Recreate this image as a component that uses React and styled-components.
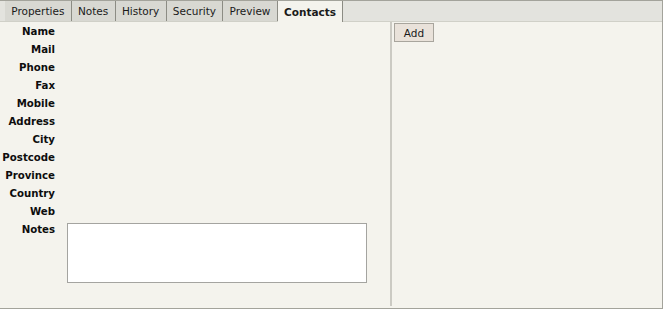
import styled, { createGlobalStyle } from "styled-components";

const GlobalStyle = createGlobalStyle`
  body {
    margin: 0;
    background: #f4f3ed;
    font-family: "DejaVu Sans", Verdana, sans-serif;
  }
`;

const tabs = ["Properties", "Notes", "History", "Security", "Preview", "Contacts"];
const fields = [
  "Name",
  "Mail",
  "Phone",
  "Fax",
  "Mobile",
  "Address",
  "City",
  "Postcode",
  "Province",
  "Country",
  "Web",
];

const App = () => {
  return (
    <>
      <GlobalStyle />
      <Frame>
        <TabBar>
          {tabs.map((t) => (
            <Tab key={t} $active={t === "Contacts"}>
              {t}
            </Tab>
          ))}
        </TabBar>
        <Body>
          <FormPanel>
            <Form>
              {fields.map((f) => (
                <Row key={f}>
                  <Label>{f}</Label>
                  <span />
                </Row>
              ))}
              <Row $tall>
                <Label>Notes</Label>
                <NotesArea />
              </Row>
            </Form>
          </FormPanel>
          <Divider />
          <SidePanel>
            <AddButton>Add</AddButton>
          </SidePanel>
        </Body>
      </Frame>
    </>
  );
};

export default App;

const Frame = styled.div`
  width: 663px;
  height: 309px;
  box-sizing: border-box;
  border-top: 1px solid #a3a39b;
  border-right: 1px solid #a3a39b;
  border-bottom: 1px solid #a3a39b;
  background: #f4f3ed;
  display: flex;
  flex-direction: column;
`;
const TabBar = styled.div`
  display: flex;
  height: 21px;
  padding-left: 5px;
  background: #e3e3de;
  border-bottom: 1px solid #d0d0c8;
  box-sizing: border-box;
`;
const Tab = styled.div`
  display: flex;
  align-items: center;
  padding: 0 6.3px;
  font-size: 10.5px;
  color: #1a1a1a;
  font-weight: ${(p) => (p.$active ? 700 : 400)};
  background: ${(p) => (p.$active ? "#f4f3ed" : "#d8d8d2")};
  border-right: 1px solid #8c8c84;
  margin-bottom: ${(p) => (p.$active ? "-1px" : "0")};
`;
const Body = styled.div`
  flex: 1;
  display: flex;
  padding-bottom: 2px;
`;
const FormPanel = styled.div`
  width: 390px;
`;
const Form = styled.div`
  display: flex;
  flex-direction: column;
  padding-top: 1px;
`;
const Row = styled.div`
  display: grid;
  grid-template-columns: 55px 300px;
  column-gap: 12px;
  height: ${(p) => (p.$tall ? "auto" : "18px")};
`;
const Label = styled.div`
  text-align: right;
  font-size: 10.2px;
  font-weight: 700;
  color: #0d0d0d;
  line-height: 18px;
  height: 18px;
`;
const NotesArea = styled.div`
  height: 60px;
  margin-top: 2px;
  box-sizing: border-box;
  background: #fff;
  border: 1px solid #a4a4a0;
`;
const Divider = styled.div`
  width: 2px;
  background: #cbcac3;
`;
const SidePanel = styled.div`
  flex: 1;
  padding: 1px 0 0 2px;
`;
const AddButton = styled.button`
  display: block;
  width: 40px;
  height: 19px;
  padding: 0;
  font-family: "DejaVu Sans", Verdana, sans-serif;
  font-size: 10.5px;
  color: #1a1a1a;
  background: #e9e2da;
  border: 1px solid #a8a59d;
`;
